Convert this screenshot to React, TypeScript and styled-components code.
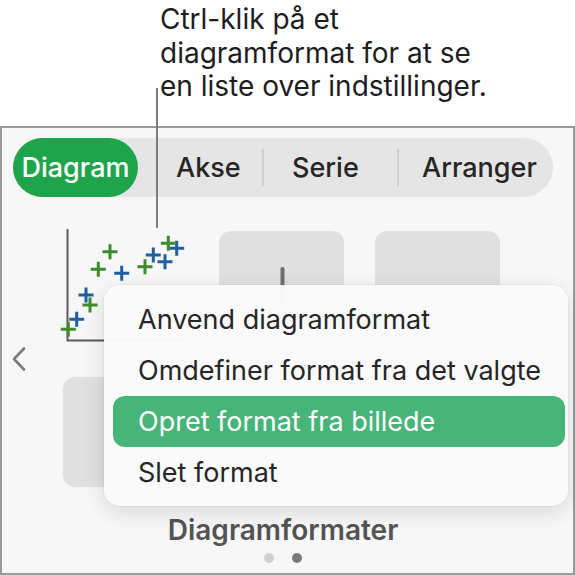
import React from "react";
import styled, { createGlobalStyle } from "styled-components";

const GlobalStyle = createGlobalStyle`
  html, body { margin: 0; padding: 0; background: #ffffff; }
  body {
    font-family: Inter, "Noto Sans", "Liberation Sans", sans-serif;
    -webkit-font-smoothing: antialiased;
  }
  * { box-sizing: border-box; }
`;

const Page = styled.div`
  position: relative;
  width: 575px;
  height: 575px;
  overflow: hidden;
  display: flex;
  flex-direction: column;
`;

const Callout = styled.p`
  margin: 0;
  flex: none;
  height: 126px;
  padding: 3px 0 0 160px;
  font-size: 28px;
  line-height: 33.5px;
  color: #1d1d1f;
`;

const Leader = styled.div`
  position: absolute;
  left: 156px;
  top: 88px;
  width: 2px;
  height: 140px;
  background: #7c7c7c;
  z-index: 3;
`;

const Panel = styled.section`
  flex: 1;
  border: 2px solid #9a9a9a;
  background: #f7f7f7;
  display: flex;
  flex-direction: column;
`;

const TabBar = styled.div`
  margin: 10px 0 0 11px;
  width: 540px;
  height: 59px;
  border-radius: 30px;
  background: #e5e5e5;
  display: flex;
  align-items: center;
`;

const Tab = styled.div<{ $w: number; $indent?: number; $active?: boolean }>`
  flex: none;
  width: ${(p) => p.$w}px;
  height: 100%;
  border-radius: 30px;
  display: flex;
  align-items: center;
  justify-content: ${(p) => (p.$indent === undefined ? "center" : "flex-start")};
  padding-left: ${(p) => p.$indent ?? 0}px;
  font-size: 27px;
  font-weight: 500;
  white-space: nowrap;
  color: ${(p) => (p.$active ? "#ffffff" : "#262626")};
  background: ${(p) => (p.$active ? "#1ea54b" : "transparent")};
`;

const Divider = styled.span`
  flex: none;
  width: 2px;
  height: 37px;
  background: #cfcfcf;
`;

const Gallery = styled.div`
  margin-top: 34px;
  display: flex;
  align-items: center;
`;

const Pager = styled.div`
  flex: none;
  width: 61px;
  padding-left: 9px;
  display: flex;
  align-items: center;
`;

const Grid = styled.div`
  display: grid;
  grid-template-columns: repeat(3, 125px);
  grid-auto-rows: 110px;
  column-gap: 31px;
  row-gap: 36px;
`;

const Thumb = styled.div<{ $plain?: boolean }>`
  position: relative;
  border-radius: 12px;
  background: ${(p) => (p.$plain ? "transparent" : "#e0e0e0")};
  overflow: visible;
`;

const ThumbArt = styled.svg`
  position: absolute;
  left: 0;
  top: 0;
  overflow: visible;
`;

const Footer = styled.div`
  display: flex;
  flex-direction: column;
  align-items: center;
  padding-right: 9px;
`;

const Caption = styled.div`
  margin-top: 28px;
  font-size: 28px;
  line-height: 30px;
  font-weight: 600;
  color: #545454;
`;

const Dots = styled.div`
  margin-top: 8px;
  display: flex;
  gap: 18px;
`;

const Dot = styled.span<{ $on?: boolean }>`
  width: 10px;
  height: 10px;
  border-radius: 50%;
  background: ${(p) => (p.$on ? "#7a7a7a" : "#cfcfcf")};
`;

const Menu = styled.div`
  position: absolute;
  left: 104px;
  top: 285px;
  width: 464px;
  padding: 9px 3px 8px 9px;
  border-radius: 16px;
  background: rgba(250, 250, 250, 0.98);
  box-shadow: 0 0 0 1px rgba(0, 0, 0, 0.03), 0 6px 22px rgba(0, 0, 0, 0.13);
  z-index: 2;
`;

const MenuItem = styled.div<{ $active?: boolean }>`
  height: 51px;
  line-height: 51px;
  padding-left: 25px;
  border-radius: 12px;
  font-size: 27px;
  white-space: nowrap;
  color: ${(p) => (p.$active ? "#ffffff" : "#262626")};
  background: ${(p) => (p.$active ? "#47b479" : "transparent")};
`;

type Pt = [number, number];

const greens: Pt[] = [
  [47, 20.7], [35.3, 38.3], [82, 35.7], [105.3, 12.3], [27, 74], [5.3, 98.3],
];
const blues: Pt[] = [
  [58.7, 42.3], [90.3, 24], [102, 30.7], [113.7, 17.3], [23, 64], [13.7, 88.3],
];

const Plus = ({ x, y, color }: { x: number; y: number; color: string }) => (
  <path
    d={`M${x - 7.5} ${y}H${x + 7.5}M${x} ${y - 7.5}V${y + 7.5}`}
    stroke={color}
    strokeWidth={3}
  />
);

const ScatterArt = () => (
  <ThumbArt width={125} height={110} viewBox="0 0 125 110">
    <path d="M4.5 -2V109.5H120" fill="none" stroke="#5a5a5a" strokeWidth={2} />
    {blues.map(([x, y], i) => (
      <Plus key={`b${i}`} x={x} y={y} color="#1f5f9e" />
    ))}
    {greens.map(([x, y], i) => (
      <Plus key={`g${i}`} x={x} y={y} color="#3d8b2c" />
    ))}
  </ThumbArt>
);

const BarArt = () => (
  <ThumbArt width={125} height={110} viewBox="0 0 125 110">
    <rect x={61.5} y={36} width={4} height={40} rx={1.5} fill="#707070" />
  </ThumbArt>
);

const ChevronLeft = () => (
  <svg width={16} height={26} viewBox="0 0 16 26">
    <path
      d="M13 2.5L3 13L13 23.5"
      fill="none"
      stroke="#7b7b7b"
      strokeWidth={2.6}
      strokeLinecap="round"
      strokeLinejoin="round"
    />
  </svg>
);

export default function App() {
  return (
    <>
      <GlobalStyle />
      <Page>
        <Callout>
          Ctrl-klik på et
          <br />
          diagramformat for at se
          <br />
          en liste over indstillinger.
        </Callout>
        <Leader />
        <Panel>
          <TabBar>
            <Tab $w={125} $active>
              Diagram
            </Tab>
            <Tab $w={124} $indent={38}>
              Akse
            </Tab>
            <Divider />
            <Tab $w={133} $indent={28}>
              Serie
            </Tab>
            <Divider />
            <Tab $w={154} $indent={23}>
              Arranger
            </Tab>
          </TabBar>
          <Gallery>
            <Pager>
              <ChevronLeft />
            </Pager>
            <Grid>
              <Thumb $plain>
                <ScatterArt />
              </Thumb>
              <Thumb>
                <BarArt />
              </Thumb>
              <Thumb />
              <Thumb />
              <Thumb />
              <Thumb />
            </Grid>
          </Gallery>
          <Footer>
            <Caption>Diagramformater</Caption>
            <Dots>
              <Dot />
              <Dot $on />
            </Dots>
          </Footer>
        </Panel>
        <Menu>
          <MenuItem>Anvend diagramformat</MenuItem>
          <MenuItem>Omdefiner format fra det valgte</MenuItem>
          <MenuItem $active>Opret format fra billede</MenuItem>
          <MenuItem>Slet format</MenuItem>
        </Menu>
      </Page>
    </>
  );
}
